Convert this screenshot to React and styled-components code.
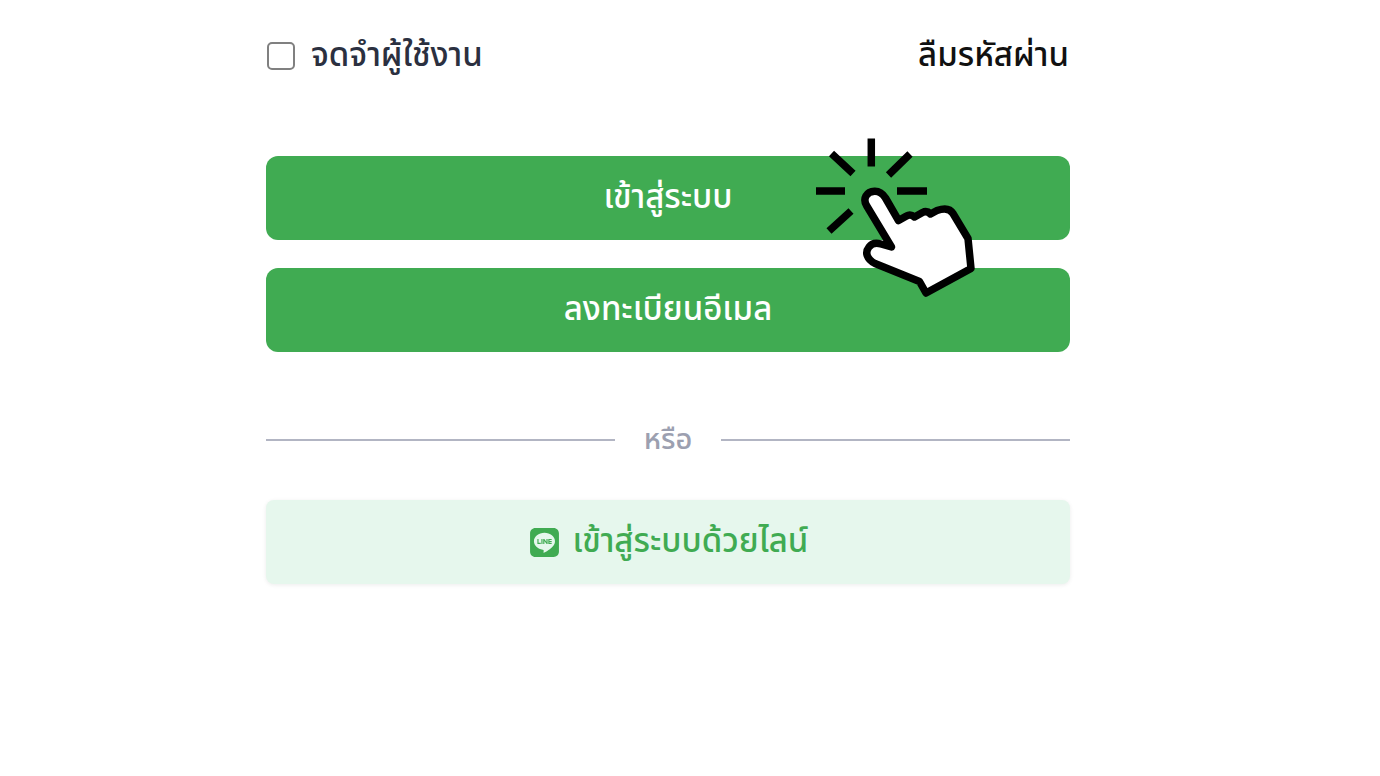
import React, { useState } from 'react';
import styled, { createGlobalStyle } from 'styled-components';
import { FaLine } from 'react-icons/fa';

const GlobalStyle = createGlobalStyle`
  * {
    box-sizing: border-box;
  }

  body {
    margin: 0;
    background: #ffffff;
    font-family: 'Noto Sans Thai', 'Noto Sans', 'Open Sans', sans-serif;
  }
`;

// -----------------------------------------------------
//  FORM STRUCTURE
// -----------------------------------------------------

const Page = styled.main`
  padding: 28px 310px 28px 266px;
`;

const Form = styled.form`
  display: flex;
  flex-direction: column;
`;

const OptionsRow = styled.div`
  display: flex;
  align-items: center;
  justify-content: space-between;
  height: 56px;
  margin-bottom: 72px;
  padding: 0 1px;
  font-size: 33px;
  font-weight: 500;
  line-height: 56px;
`;

const RememberLabel = styled.label`
  display: flex;
  align-items: center;
  gap: 16px;
  color: #2b3040;
  cursor: pointer;
`;

const Checkbox = styled.input`
  appearance: none;
  width: 28px;
  height: 28px;
  margin: 0;
  background: #ffffff;
  border: 2px solid #808080;
  border-radius: 5px;
  cursor: pointer;

  &:checked {
    background: #40ab52;
    border-color: #40ab52;
  }
`;

const ForgotLink = styled.a`
  color: #111111;
  text-decoration: none;
`;

const Buttons = styled.div`
  position: relative;
  display: flex;
  flex-direction: column;
  gap: 28px;
`;

const Button = styled.button`
  display: flex;
  align-items: center;
  justify-content: center;
  gap: 12px;
  width: 100%;
  height: 84px;
  padding: 0;
  border: none;
  border-radius: ${({ $soft }) => ($soft ? '8px' : '12px')};
  background: ${({ $soft }) => ($soft ? '#e6f7ed' : '#40ab52')};
  box-shadow: ${({ $soft }) => ($soft ? '0 1px 4px rgba(0, 0, 0, 0.08)' : 'none')};
  color: ${({ $soft }) => ($soft ? '#40ab52' : '#ffffff')};
  font-family: inherit;
  font-size: 33px;
  font-weight: 500;
  line-height: 56px;
  cursor: pointer;
`;

const Divider = styled.div`
  display: flex;
  align-items: center;
  gap: 29px;
  height: 56px;
  margin: 60px 0 32px;
  color: #9ca0b0;
  font-size: 29px;
  font-weight: 500;
  line-height: 56px;

  &::before,
  &::after {
    content: '';
    flex: 1;
    height: 2px;
    background: #b2b5c3;
  }
`;

// -----------------------------------------------------
//  CLICK POINTER
// -----------------------------------------------------

const Pointer = styled.svg`
  position: absolute;
  top: -26px;
  right: 80px;
  width: 190px;
  height: 175px;
  pointer-events: none;
`;

const ClickPointer = () => (
  <Pointer viewBox="0 0 190 175" fill="none" stroke="#000000" strokeWidth="7.5" aria-hidden="true">
    <path d="M71.3 8.5V36.5M31.5 23.5L53 43.5M110 24L88.5 45M16 61H45M97 61H127M51 81L29 101" />
    <path
      fill="#ffffff"
      strokeLinejoin="round"
      d="M91.5 117L66.5 75.5C62.5 68.5 66.5 61.5 74.5 61.2C79.5 61 83 64 85.5 68L98.5 90.5L106.5 86C109 84.5 111.5 84.5 114.5 87L122.5 82.5C125.5 81 128 81.5 130.5 84L137 80.5C144 78 150 78.5 153 83.5L168 108.5L171 138.5L126 163L119.5 151.5L75 133.5C67 129.5 64.5 122.5 69 117C72 113 76 112.5 81 114Z"
    />
  </Pointer>
);

// -----------------------------------------------------
//  MAIN COMPONENT
// -----------------------------------------------------

const App = () => {
  const [remember, setRemember] = useState(false);

  return (
    <>
      <GlobalStyle />
      <Page lang="th">
        <Form onSubmit={(e) => e.preventDefault()}>

          <OptionsRow>
            <RememberLabel htmlFor="remember">
              <Checkbox
                id="remember"
                type="checkbox"
                checked={remember}
                onChange={(e) => setRemember(e.target.checked)}
              />
              จดจำผู้ใช้งาน
            </RememberLabel>
            <ForgotLink href="#forgot">ลืมรหัสผ่าน</ForgotLink>
          </OptionsRow>

          <Buttons>
            <Button type="submit">เข้าสู่ระบบ</Button>
            <Button type="button">ลงทะเบียนอีเมล</Button>
            <ClickPointer />
          </Buttons>

          <Divider>หรือ</Divider>

          <Button type="button" $soft>
            <FaLine size={33} aria-hidden="true" />
            เข้าสู่ระบบด้วยไลน์
          </Button>

        </Form>
      </Page>
    </>
  );
};

export default App;
